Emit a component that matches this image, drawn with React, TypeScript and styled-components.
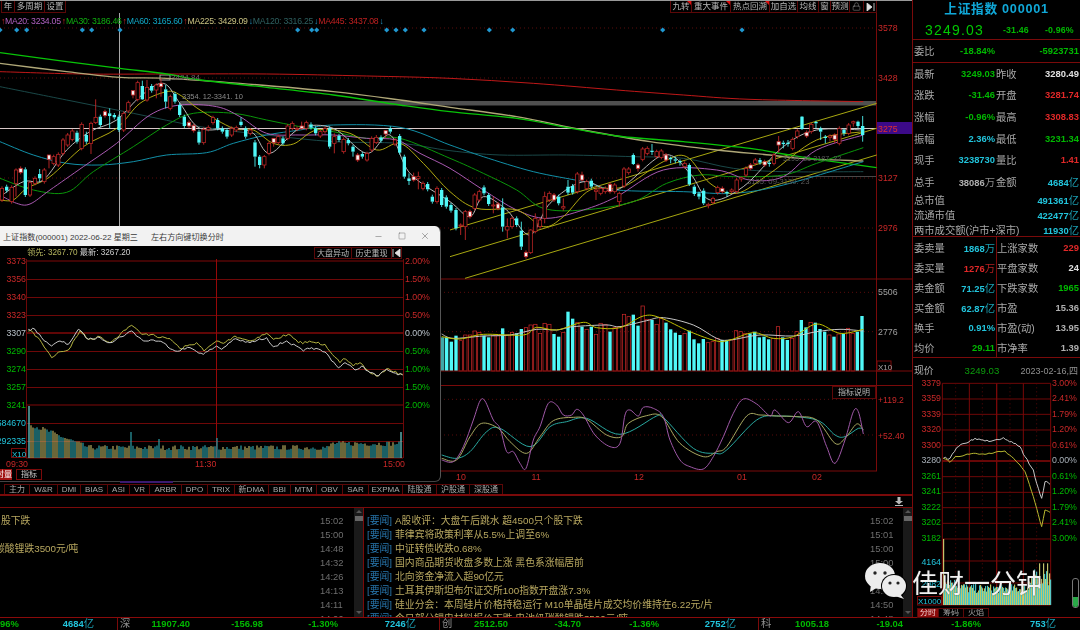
import React from 'react';
import styled, { createGlobalStyle } from 'styled-components';
import { Minus, Square, X, Lock } from 'lucide-react';

const SANS = `"Liberation Sans", "Noto Sans CJK SC", sans-serif`;
const RED = '#c82828';
const GREEN = '#00b800';
const CYAN = '#22c4dc';
const GRID = '#7a0a0a';

const Global = createGlobalStyle`
  html, body { margin: 0; padding: 0; background: #000; }
  body { font-family: ${SANS}; }
  * { box-sizing: border-box; }
`;

/* ---------- drawing helpers (coordinates are traced at 3x) ---------- */
type P = [number, number];
const pts = (flat: number[], dx = 0): P[] => {
  const r: P[] = [];
  for (let i = 0; i < flat.length; i += 2) r.push([flat[i] + dx, flat[i + 1]]);
  return r;
};
const smooth = (p: P[]) => {
  let d = `M${p[0][0]} ${p[0][1]}`;
  for (let i = 0; i < p.length - 1; i++) {
    const a = p[Math.max(i - 1, 0)], b = p[i], c = p[i + 1], e = p[Math.min(i + 2, p.length - 1)];
    d += `C${b[0] + (c[0] - a[0]) / 6} ${b[1] + (c[1] - a[1]) / 6} ${c[0] - (e[0] - b[0]) / 6} ${c[1] - (e[1] - b[1]) / 6} ${c[0]} ${c[1]}`;
  }
  return d;
};
let seed = 7;
const rnd = () => {
  seed = (seed * 16807) % 2147483647;
  return seed / 2147483647;
};
const jag = (p: P[], step: number, amp: number): string => {
  const out: string[] = [];
  for (let i = 0; i < p.length - 1; i++) {
    const n = Math.max(1, Math.round((p[i + 1][0] - p[i][0]) / step));
    for (let k = 0; k < n; k++) {
      const t = k / n;
      out.push(`${p[i][0] + (p[i + 1][0] - p[i][0]) * t},${p[i][1] + (p[i + 1][1] - p[i][1]) * t + (k ? (rnd() - 0.5) * amp : 0)}`);
    }
  }
  out.push(p[p.length - 1].join(','));
  return out.join(' ');
};

/* ---------- main chart data ---------- */
const MA_LINES: { c: string; w?: number; p: P[] }[] = [
  { c: '#1a4848', p: [...pts([0,260,200,300,400,340,600,380,800,405,1000,425,1200,430,1350,452]), ...pts([150,465,350,465,550,470,700,475,850,505,1000,515,1240,515],1350)] },
  { c: '#c01818', p: [...pts([0,215,250,222,500,222,800,222,1100,228,1350,235]), ...pts([250,250,500,270,700,285,900,298,1240,305],1350)] },
  { c: '#b0a878', w: 4, p: [...pts([0,190,200,215,360,232,500,235,720,250,1000,275,1200,300,1350,322]), ...pts([200,350,400,390,600,425,800,450,960,465,1050,475,1240,483],1350)] },
  { c: '#08c408', w: 4, p: [...pts([0,158,200,185,360,205,500,222,600,240,800,262,1000,285,1200,315,1350,335]), ...pts([200,355,350,382,500,408,700,425,900,445,1000,462,1100,478,1280,503],1350)] },
  { c: '#1290a8', p: [...pts([0,425,100,465,200,490,300,495,400,485,500,465,620,458,700,430,800,405,900,390,1000,375,1200,382,1350,435]), ...pts([100,470,250,515,400,545,500,570,700,575,850,580,1000,555,1240,485],1350)] },
  { c: '#0a960a', p: [...pts([0,535,100,570,200,577,280,515,400,440,500,375,580,340,700,340,800,360,900,380,1000,395,1100,415,1200,415,1350,475]), ...pts([100,520,200,570,280,625,400,630,550,605,650,550,750,525,850,530,1000,525,1100,490,1240,443],1350)] },
  { c: '#a858b0', p: [...pts([0,585,50,610,90,612,150,570,250,500,350,430,450,345,540,315,650,320,720,350,800,400,900,405,1000,405,1100,415,1190,420,1260,460,1350,505]), ...pts([100,570,200,630,290,655,400,630,500,590,640,510,800,510,900,540,1000,530,1100,450,1240,405],1350)] },
  { c: '#b0a810', p: [...pts([0,600,40,600,80,565,150,530,250,440,350,385,420,310,500,275,540,285,600,330,700,385,760,390,820,430,880,432,950,390,1050,400,1130,450,1200,430,1270,490,1350,575]), ...pts([80,625,200,630,280,680,340,650,420,570,520,560,640,485,710,470,780,550,860,580,960,520,1100,420,1240,395],1350)] },
  { c: '#b8b8b8', p: [...pts([0,590,70,545,130,540,200,450,270,395,350,360,420,290,490,250,540,310,600,385,700,385,760,400,810,460,900,385,1000,385,1100,460,1170,405,1230,520,1350,605]), ...pts([60,650,100,590,170,630,240,705,300,610,400,545,500,570,640,465,720,520,780,600,880,560,1000,440,1100,390,1240,390],1350)] },
];

type Candle = [number, number, number, number, number, string];
const c = (x: number, t: number, b: number, k: string, wt = t - 6, wb = b + 6): Candle => [x, t, b, wt, wb, k];
const CANDLES: Candle[] = [
  c(6,565,600,'r'),c(20,560,572,'c'),c(35,562,605,'r'),c(48,510,550,'r',505,590),c(62,505,517,'w'),c(76,508,585,'c'),c(90,548,585,'r'),c(105,535,550,'r'),c(119,522,535,'c',507,545),c(133,510,545,'r'),
  c(147,465,478,'w',465,505),c(161,470,490,'r'),c(175,463,495,'r'),c(189,420,460,'r'),c(203,405,435,'r'),c(217,393,418,'r'),c(231,398,425,'c'),c(245,373,445,'r'),c(259,405,425,'c',395,432),c(273,370,430,'r',365,462),
  c(287,352,368,'r',298,372),c(301,350,375,'c'),c(315,335,347,'w'),c(329,340,348,'c',325,385),c(343,345,352,'c'),c(357,350,390,'c'),c(371,340,390,'r'),c(385,308,333,'r'),c(399,272,285,'w',272,295),c(413,248,298,'r'),
  c(427,258,298,'c',242,300),c(441,262,300,'r',240,305),c(455,258,272,'c'),c(469,255,270,'r',250,295),c(483,250,260,'w',235,290),c(497,268,305,'c',255,325),c(511,290,325,'r'),c(525,282,305,'c'),c(539,315,345,'c'),c(553,350,378,'c'),
  c(567,367,378,'w'),c(581,377,392,'w'),c(597,395,428,'c'),c(611,388,428,'r'),c(625,382,388,'r'),c(639,353,368,'r'),c(653,360,385,'c'),c(667,385,395,'c'),c(681,390,410,'c'),c(695,385,405,'r'),
  c(709,383,390,'r'),c(723,365,375,'c',352,380),c(737,385,410,'c'),c(751,390,400,'r'),c(765,427,470,'c',420,500),c(779,470,495,'c',465,505),c(793,470,495,'r',465,505),c(807,430,460,'r'),c(821,415,428,'w',415,440),c(835,410,428,'r'),
  c(849,415,430,'c'),c(863,378,415,'r'),c(877,370,385,'r'),c(891,385,388,'r'),c(905,378,385,'w',365,390),c(919,368,385,'r'),c(933,373,383,'c'),c(947,385,400,'c'),c(961,395,408,'r'),c(975,385,395,'r'),
  c(989,385,440,'c'),c(1003,410,430,'r',400,460),c(1017,408,420,'c'),c(1031,418,455,'r'),c(1045,420,430,'c'),c(1059,440,455,'c',435,470),c(1073,465,480,'w'),c(1087,462,470,'c'),c(1101,460,480,'r',455,485),c(1115,415,450,'r'),
  c(1129,412,428,'r',405,432),c(1143,412,422,'c'),c(1157,392,402,'w',390,415),c(1171,385,395,'c'),c(1185,420,432,'r'),c(1199,408,458,'c'),c(1213,470,530,'c'),c(1227,535,543,'c',520,555),c(1241,530,540,'w',518,545),c(1255,530,535,'r',515,568),
  c(1269,550,565,'r'),c(1283,552,568,'c'),c(1297,590,605,'c'),c(1311,565,605,'r'),c(1325,570,615,'c'),c(1339,592,620,'c'),
];
const C2: Candle[] = [
  c(3,615,632,'c'),c(18,630,685,'c'),c(32,675,678,'r',670,705),c(46,635,680,'r',630,720),c(60,635,650,'w'),c(74,585,625,'r'),c(88,575,600,'r'),c(102,562,580,'c'),c(116,585,612,'c'),c(130,615,618,'r',590,640),
  c(144,612,625,'w'),c(158,622,680,'c',595,695),c(172,680,690,'r',655,715),c(186,655,680,'r'),c(200,655,675,'c'),c(214,692,740,'c',665,750),c(228,757,770,'w'),c(242,690,758,'r',688,762),c(256,655,695,'r',640,700),c(270,660,680,'r'),
  c(284,590,655,'r',575,670),c(298,580,600,'r'),c(312,585,600,'w'),c(326,590,610,'c'),c(340,620,624,'r',595,632),c(354,560,578,'c',540,585),c(368,558,578,'c'),c(382,522,575,'r'),c(396,525,540,'w',515,545),c(410,545,565,'r'),
  c(424,542,560,'c'),c(438,570,574,'r',560,600),c(452,565,580,'r'),c(466,565,575,'r'),c(480,553,575,'w'),c(494,555,575,'r'),c(508,580,605,'r',575,620),c(522,507,558,'r'),c(536,507,518,'r'),c(550,465,492,'c',460,495),
  c(564,495,505,'w',490,515),c(578,447,478,'r'),c(592,445,460,'r'),c(606,452,456,'c',432,465),c(620,455,470,'r'),c(634,453,472,'r'),c(648,465,480,'w'),c(662,474,478,'c',470,490),c(676,478,482,'c',470,490),c(690,483,487,'c',478,497),
  c(704,490,500,'r'),c(718,495,553,'c',490,558),c(733,560,582,'c'),c(747,580,590,'c',575,598),c(761,572,610,'c',565,615),c(775,613,617,'r',608,625),c(789,595,608,'r',590,612),c(803,563,578,'r'),c(817,565,575,'w'),c(831,576,580,'c',572,590),
  c(845,570,575,'r',565,580),c(860,540,575,'r'),c(874,533,537,'r',530,545),c(888,505,525,'r'),c(902,495,505,'w'),c(916,480,490,'r'),c(930,480,488,'c'),c(944,485,495,'w'),c(958,488,492,'c',482,500),c(972,465,490,'r'),
  c(986,425,435,'w',408,458),c(1000,428,432,'c',422,445),c(1014,428,432,'c',420,440),c(1028,418,445,'r'),c(1042,393,410,'r'),c(1056,350,387,'c',348,390),c(1070,397,408,'w'),c(1084,373,395,'r'),c(1098,366,370,'c',362,385),c(1112,385,395,'c',380,420),
  c(1126,410,414,'c',405,430),c(1140,408,412,'r',403,425),c(1154,405,418,'w',400,430),c(1168,385,430,'r'),c(1182,390,400,'c',385,408),c(1196,375,400,'r'),c(1210,365,369,'r',362,380),c(1224,365,378,'c',362,385),c(1238,378,405,'c',348,425),
];
const ALL_CANDLES = [...CANDLES, ...C2.map(k => [k[0] + 1350, k[1], k[2], k[3], k[4], k[5]] as Candle)];

const VOL_BARS: [number, number, string][] = [
  [8,172,'d'],[20,172,'c'],[34,185,'c'],[48,167,'c'],[62,182,'r'],[76,165,'r'],[90,165,'r'],[104,153,'r'],[118,157,'r'],[132,167,'c'],[146,172,'c'],[160,167,'r'],[174,167,'r'],[188,145,'c'],[202,165,'r'],[216,157,'r'],[230,160,'c'],[244,147,'c'],[258,143,'r'],[272,135,'r'],[286,133,'r'],[300,160,'r'],[314,130,'r'],[328,133,'r'],[342,162,'c'],[356,170,'c'],[370,157,'r'],[384,95,'c'],[398,116,'c'],[412,128,'r'],[426,140,'c'],[440,148,'r'],[454,140,'c'],[468,163,'r'],[482,130,'r'],[496,133,'r'],[510,155,'c'],[524,143,'r'],[538,140,'r'],[552,103,'r'],[566,110,'r'],[580,104,'c'],[594,137,'c'],[608,78,'r'],[622,118,'r'],[636,120,'c'],[650,133,'r'],[664,115,'r'],[678,128,'c'],[692,148,'c'],[706,158,'c'],[720,165,'c'],[734,160,'r'],[748,152,'c'],[762,178,'c'],[776,190,'c'],[790,177,'c'],[804,188,'r'],[818,185,'r'],[832,175,'r'],[846,180,'c'],[860,180,'c'],[874,180,'r'],[888,152,'r'],[902,155,'r'],[916,160,'r'],[930,160,'c'],[944,155,'c'],[958,172,'c'],[972,170,'c'],[986,178,'c'],[1000,175,'r'],[1014,140,'r'],[1028,172,'c'],[1042,180,'c'],[1056,175,'r'],[1070,155,'r'],[1084,120,'c'],[1098,142,'c'],[1112,127,'r'],[1126,128,'c'],[1140,147,'c'],[1154,155,'c'],[1168,165,'r'],[1182,170,'c'],[1196,162,'r'],[1210,162,'c'],[1224,145,'r'],[1238,160,'r'],[1252,155,'c'],[1266,108,'c'],
];
const VOL_Y = pts([5,170,60,177,130,163,250,165,290,142,350,150,430,127,470,143,540,143,610,108,660,113,750,155,830,183,870,180,940,158,1000,175,1060,170,1130,132,1200,160,1270,148]);
const VOL_W = pts([5,162,40,175,130,168,210,165,290,148,350,150,400,140,500,135,540,140,620,122,670,113,760,135,830,175,870,180,960,165,1060,168,1130,155,1200,148,1270,153]);
const IND_P = pts([5,540,40,545,70,500,100,420,120,363,135,363,160,420,180,445,200,515,220,515,240,550,258,565,280,480,300,440,325,370,350,375,370,405,395,405,410,388,430,405,465,465,510,500,540,490,555,405,570,390,595,408,610,382,640,385,670,410,690,480,720,540,750,560,790,567,820,530,850,470,880,400,910,357,950,372,990,408,1005,390,1045,428,1075,395,1100,440,1130,425,1160,500,1185,550,1215,480,1240,395,1255,395,1270,462]);
const IND_K = pts([5,535,50,540,90,470,125,430,175,445,210,485,260,520,300,470,340,422,400,412,440,418,500,465,545,470,565,430,620,407,665,410,720,490,790,530,830,515,860,500,920,408,960,405,1010,408,1070,410,1130,420,1185,490,1215,475,1250,432,1270,450]);
const IND_T = pts([5,525,50,535,90,515,140,455,180,445,270,500,330,440,380,425,440,415,540,463,650,408,670,412,760,505,825,520,860,510,950,420,1015,408,1130,420,1185,465,1215,470,1255,445,1270,450]);

const DIAMONDS = [0,50,80,247,275,360,893,935,950,1160,1188,1216,1272,1468,1538,1988,2226];

/* ---------- window data ---------- */
const WIN_Y = pts([85,315,100,320,125,350,155,395,175,378,205,372,240,315,265,340,300,332,330,350,385,303,395,298,425,325,460,325,480,335,510,338,540,368,590,350,612,375,650,345,670,352,705,330,750,345,800,322,820,340,865,325,895,350,935,348,975,355,1020,410,1030,398,1060,420,1080,410,1110,440,1135,450,1160,428,1180,438,1208,445]);
const WIN_W = pts([85,310,105,310,125,335,155,360,180,345,205,355,235,310,265,340,300,335,330,350,395,315,430,345,460,342,490,350,525,375,570,365,610,385,650,360,665,370,700,340,750,350,800,335,820,362,860,345,910,375,935,365,975,378,1015,425,1035,410,1065,432,1085,420,1110,440,1135,450,1160,430,1180,440,1208,447]);
const winLineY = jag(WIN_Y, 7, 8);
const winLineW = jag(WIN_W, 7, 7);
const WIN_BARS = Array.from({ length: 187 }, (_, i) => {
  const x = 29 + i * 2;
  const decay = Math.max(0, 30 - i) * 0.8;
  const tail = i > 150 ? 4 : 0;
  let h = 8 + rnd() * 5 + decay + tail;
  if (i === 0) h = 52;
  if (x === 131) h = 26;
  if (x === 159) h = 19;
  if (x === 217) h = 20;
  if (i === 186) h = 26;
  const warm = Math.floor(i / 3) % 2 === 0;
  return { x, h, col: x === 29 || i === 186 ? '#70d8d8' : warm ? '#b4ac60' : '#2c9fa8' };
});

/* mini */
const MINI_W = jag(pts([115,250,135,250,155,218,180,205,210,190,240,198,270,195,295,188,320,200,345,215,360,245,385,285,395,325,410,370,420,320,435,328]), 6, 7);
const MINI_Y = jag(pts([115,250,135,262,150,245,180,240,205,235,240,238,270,232,300,228,320,245,345,270,360,290,380,350,395,400,410,455,420,405,435,412]), 6, 5);
const MINI_BARS = Array.from({ length: 108 }, (_, i) => {
  const x = 116 + i * 3;
  let h = 35 + rnd() * 28 + Math.max(0, 25 - i) * 1.2;
  if (i > 85) h += 18 + rnd() * 30;
  if (i === 0) h = 198;
  if (i > 95 && i % 4 === 0) h = 125;
  return { x, h, col: i > 25 && i < 80 ? (i % 2 ? '#e8e870' : '#50e8e8') : i % 2 ? '#50e8e8' : '#e8e880' };
});

/* ---------- page frame ---------- */
const Page = styled.div`
  position: relative; width: 1080px; height: 630px; background: #000; overflow: hidden;
  display: flex; flex-direction: column; color: #b0b0b0; font-size: 10px;
`;
const Soft = styled.div`
  display: flex; flex-direction: column; width: 100%; height: 100%; filter: blur(0.35px);
`;
const Workspace = styled.div`display: flex; height: 617px;`;
const MainColumn = styled.div`display: flex; flex-direction: column; width: 912px; flex: none;`;

/* top toolbar */
const TopBar = styled.div`
  display: flex; justify-content: space-between; height: 13px; border-top: 1px solid #999;
  padding-right: 35px;
`;
const ToolGroup = styled.div<{ $pad?: number }>`display: flex; padding-left: ${p => p.$pad || 0}px;`;
const ToolButton = styled.div<{ $w: number; $flag?: boolean }>`
  position: relative; flex: none; width: ${p => p.$w}px; height: 12px; border: 1px solid #5c0808; border-top: 0; margin-left: -1px;
  line-height: 11px; font-size: 8.5px; color: #b8b8b8; white-space: nowrap; overflow: hidden;
  display: flex; align-items: center; justify-content: center;
  &::after {
    content: ''; display: ${p => (p.$flag ? 'block' : 'none')}; position: absolute; top: 0; right: 0;
    border-top: 4px solid #e01010; border-left: 4px solid transparent;
  }
`;

/* chart stage */
const Stage = styled.div`position: relative; height: 471px; width: 912px; overflow: hidden;`;
const ChartSvg = styled.svg`display: block; flex: none;`;
const Legend = styled.div`
  position: absolute; left: 1px; top: 2px; display: flex; white-space: nowrap; font-size: 8.7px;
  letter-spacing: -0.25px; line-height: 12px;
`;
const LegendItem = styled.span<{ $c: string }>`color: ${p => p.$c}; margin-right: 1px;`;
const Arrow = styled.span<{ $c: string }>`color: ${p => p.$c};`;
const AxisText = styled.text<{ $c?: string; $s?: number }>`
  font-family: ${SANS}; font-size: ${p => p.$s || 8.8}px; fill: ${p => p.$c || RED};
`;
const ExplainButton = styled.div`
  position: absolute; left: 832px; top: 373px; width: 44px; height: 13px; border: 1px solid #5c0808;
  text-align: center; font-size: 8px; line-height: 11px; color: #b8b8b8;
`;

/* floating window */
const Win = styled.div`
  position: absolute; left: 0; top: 213px; width: 441px; height: 256px; background: #000;
  border-right: 1px solid #555; border-bottom: 1px solid #444; border-radius: 0 6px 6px 0;
  display: flex; flex-direction: column; overflow: hidden;
`;
const WinTitle = styled.div`
  flex: none; height: 20px; background: #f2f2f2; color: #3a3a3a; display: flex; align-items: center;
  padding-left: 3px; font-size: 8.1px; white-space: nowrap;
`;
const WinTitleHint = styled.span`margin-left: 13px;`;
const WinControls = styled.div`
  margin-left: auto; display: flex; width: 86px; justify-content: space-between; padding: 0 10px 0 20px; align-items: center;
`;
const WinHead = styled.div`flex: none; height: 11px; display: flex; padding: 1px 38px 0 27px; font-size: 8.2px; line-height: 11px;`;
const WinQuote = styled.div`flex: 1; white-space: nowrap; color: #d0d0d0;`;
const Lead = styled.span`color: #b8b860;`;
const WinButton = styled.div<{ $w: number }>`
  flex: none; width: ${p => p.$w}px; height: 12px; border: 1px solid #5c0808; margin-left: -1px; color: #b8b8b8;
  line-height: 11px; font-size: 8px; display: flex; align-items: center; justify-content: center; white-space: nowrap;
`;
const WinTabs = styled.div`display: flex; height: 11px; flex: none; margin-top: 1px; gap: 4px;`;
const WinTab = styled.div<{ $w: number; $on?: boolean }>`
  flex: none; width: ${p => p.$w}px; border: ${p => (p.$on ? '0' : '1px solid #7a0a0a')}; font-size: 8px; line-height: 9px;
  display: flex; align-items: center; justify-content: ${p => (p.$on ? 'flex-end' : 'center')}; white-space: nowrap;
  color: ${p => (p.$on ? '#fff' : '#c8c8c8')}; background: ${p => (p.$on ? '#a01010' : '#000')}; overflow: hidden;
`;
const PurpleSliver = styled.div`
  position: absolute; left: 120px; top: 468px; width: 53px; height: 2px; background: #3a1a70;
`;

/* indicator tabs */
const TabRow = styled.div`display: flex; height: 10px; padding-left: 5px;`;
const Tab = styled.div<{ $w: number }>`
  flex: none; width: ${p => p.$w}px; height: 11px; margin-left: -1px; border: 1px solid #5c0808; text-align: center; color: #a8a8a8;
  font-size: 8px; line-height: 9px; white-space: nowrap; overflow: hidden;
`;
const Strip = styled.div`
  height: 14px; border-top: 2px solid #7a0a0a; border-bottom: 1px solid #7a0a0a; position: relative;
  display: flex; justify-content: flex-end; padding-right: 9px; align-items: center;
`;

/* news */
const News = styled.div`display: flex; height: 109px; overflow: hidden;`;
const NewsCol = styled.div<{ $w: number; $pad?: number }>`
  width: ${p => p.$w}px; flex: none; padding: 6px 0 0 ${p => p.$pad || 0}px;
`;
const NewsRow = styled.div`display: flex; height: 14px; line-height: 14px; white-space: nowrap; font-size: 9.8px; color: #b8a860;`;
const NewsTag = styled.span`color: #2878b0; margin-right: 3px; flex: none;`;
const NewsText = styled.span<{ $indent?: number }>`flex: 1; overflow: hidden; text-indent: ${p => p.$indent || 0}px;`;
const NewsTime = styled.span`color: #6e6e6e; flex: none; font-size: 9.4px; width: 22px; text-align: right;`;
const NewsGap = styled.div<{ $w: number }>`width: ${p => p.$w}px; flex: none;`;
const ScrollBar = styled.div`
  width: 9px; flex: none; background: #1a1a1a; display: flex; flex-direction: column; align-items: center; padding-top: 2px; position: relative;
`;
const ScrollUp = styled.div`width: 0; height: 0; border: 3px solid transparent; border-bottom: 3px solid #555; border-top: 0;`;
const ScrollDown = styled.div`position: absolute; bottom: 3px; width: 0; height: 0; border: 3px solid transparent; border-top: 3px solid #555; border-bottom: 0;`;
const ScrollThumb = styled.div`width: 8px; height: 5px; background: #666; margin-top: 3px;`;
const NewsDivider = styled.div`width: 1px; flex: none; background: #7a0a0a;`;

/* side panel */
const Side = styled.div`
  width: 168px; flex: none; border-left: 1px solid #7a0a0a; display: flex; flex-direction: column; position: relative;
`;
const SideTitle = styled.div`
  height: 21px; text-align: center; color: #10a8d8; font-weight: 700; font-size: 12.7px; line-height: 19px; letter-spacing: 0.7px;
`;
const Quote = styled.div`
  height: 19px; display: flex; align-items: center; border-bottom: 1px solid #7a0a0a; color: ${GREEN}; padding-left: 12px;
  font-weight: 700; font-size: 8.8px; letter-spacing: 0.15px;
`;
const BigPrice = styled.span`font-size: 14px; font-weight: 400; letter-spacing: 1.2px; width: 78px; color: #00c800;`;
const QuoteChange = styled.span<{ $w: number }>`width: ${p => p.$w}px;`;
const Block = styled.div<{ $line?: boolean }>`
  display: flex; flex-direction: column; ${p => (p.$line ? 'border-bottom: 1px solid #7a0a0a;' : '')}
`;
const Row = styled.div<{ $h: number }>`
  display: flex; align-items: center; height: ${p => p.$h}px; white-space: nowrap; padding: 0 1px;
`;
const Label = styled.span`font-size: 10.3px; color: #a8a8a8; flex: 1;`;
const Value = styled.span<{ $c: string }>`
  color: ${p => p.$c}; font-weight: 700; font-size: 9.4px; text-align: right; flex: none; margin-left: auto;
`;
const Unit = styled.span`font-weight: 400; font-size: 10.3px; opacity: 0.8;`;
const Cell = styled.div<{ $line?: boolean; $w?: number }>`
  display: flex; align-items: center; height: 100%;
  ${p => (p.$w ? `width: ${p.$w}px; flex: none; padding-right: 1px;` : 'flex: 1;')}
  ${p => (p.$line ? 'border-left: 1px solid #7a0a0a; padding-left: 0;' : '')}
`;
const NowRow = styled.div`
  height: 20px; padding: 4px 2px 0 1px; display: flex; align-items: center; font-size: 9.8px; white-space: nowrap;
`;
const NowPrice = styled.span`color: #0c9c0c; font-size: 9.6px; margin-left: 31px;`;
const NowDate = styled.span`color: #909090; margin-left: auto; font-size: 9px;`;
const MiniTabs = styled.div`display: flex; padding-left: 5px; height: 9px;`;
const MiniTab = styled.div<{ $w: number; $on?: boolean }>`
  flex: none; width: ${p => p.$w}px; height: 10px; margin-left: -1px; border: 1px solid #5c0808; font-size: 8px; line-height: 8px; text-align: center;
  color: ${p => (p.$on ? '#f0d0d0' : '#a0a0a0')}; background: ${p => (p.$on ? '#8c0a0a' : '#000')}; overflow: hidden;
`;
const Battery = styled.div`
  position: absolute; right: 1px; top: 578px; width: 7px; height: 30px; border: 1px solid #777; border-radius: 3px;
  display: flex; align-items: flex-end; overflow: hidden;
`;
const BatteryFill = styled.div`width: 100%; height: 10px; background: #2aa848;`;

/* status bar */
const Status = styled.div`
  height: 13px; border-top: 1px solid #8a0a0a; display: flex; font-weight: 700; font-size: 9.4px; line-height: 12px; white-space: nowrap; overflow: hidden;
`;
const Market = styled.div<{ $w: number; $line?: boolean }>`
  width: ${p => p.$w}px; flex: none; display: flex; position: relative; ${p => (p.$line ? 'border-left: 1px solid #7a0a0a;' : '')}
`;
const MarketName = styled.span`width: 12px; flex: none; font-weight: 400; color: #909090; font-size: 10.3px; padding-left: 2px;`;
const MarketCell = styled.span<{ $w: number; $c: string }>`
  width: ${p => p.$w}px; flex: none; text-align: right; color: ${p => p.$c};
`;
const Yi = styled.span`font-weight: 400; font-size: 10.3px; opacity: 0.8;`;

/* watermark */
const Watermark = styled.div`
  position: absolute; left: 865px; top: 563px; display: flex; align-items: center; color: #f2f2f2; z-index: 5;
  font-size: 26px; line-height: 34px; white-space: nowrap;
  font-family: "Noto Sans CJK SC", sans-serif;
`;
const WatermarkText = styled.span`margin-left: 5px; margin-top: 1px; text-shadow: 0 0 2px rgba(40,40,40,0.6);`;

/* ---------- sections ---------- */
const TABS: [string, number][] = [['主力',26],['W&R',29],['DMI',24],['BIAS',28],['ASI',23],['VR',21],['ARBR',33],['DPO',27],['TRIX',28],['新DMA',35],['BBI',23],['MTM',27],['OBV',27],['SAR',27],['EXPMA',35],['陆股通',35],['沪股通',34],['深股通',34]];

const priceColor = (k: string) => (k === 'c' ? '#50f8f8' : RED);

const MainChart = () => (
  <ChartSvg width={912} height={471} viewBox="0 13 912 471">
    {[28, 78, 178, 228].map(y => (
      <line key={y} x1={0} x2={876} y1={y} y2={y} stroke="#5a0c0c" strokeDasharray="1 3" />
    ))}
    <line x1={0} x2={876} y1={128.5} y2={128.5} stroke="#d8c8c8" strokeWidth={1} />
    <rect x={180} y={101} width={696} height={4.5} fill="#505050" />
    <line x1={119.5} x2={119.5} y1={13} y2={226} stroke="#a8a8a8" />
    <line x1={744} x2={876} y1={176.5} y2={176.5} stroke="#484848" />
    <line x1={0} x2={912} y1={279} y2={279} stroke={GRID} />
    <line x1={876.5} x2={876.5} y1={13} y2={471} stroke={GRID} />
    <rect x={160} y={75} width={10} height={5} fill="none" stroke="#a8a8a8" />

    {DIAMONDS.map(z => (
      <polygon key={z} points={`${z / 3},27.4 ${z / 3 + 2.6},30 ${z / 3},32.6 ${z / 3 - 2.6},30`} fill="#2098d0" />
    ))}

    <g transform="scale(0.33333)" fill="none">
      <line x1={1350} y1={690} x2={2630} y2={310} stroke="#a8a810" strokeWidth={3} />
      <line x1={1350} y1={770} x2={2630} y2={385} stroke="#a8a810" strokeWidth={3} />
      <line x1={1395} y1={835} x2={2630} y2={465} stroke="#a8a810" strokeWidth={3} />
      {MA_LINES.map((l, i) => (
        <path key={i} d={smooth(l.p)} stroke={l.c} strokeWidth={l.w || 3} />
      ))}
      {ALL_CANDLES.map(([x, t, b, wt, wb, k], i) => (
        <g key={i}>
          <line x1={x} x2={x} y1={wt} y2={t} stroke={priceColor(k)} strokeWidth={2.6} />
          <line x1={x} x2={x} y1={b} y2={wb} stroke={priceColor(k)} strokeWidth={2.6} />
          {k === 'w' ? (
            <rect x={x - 5} y={t} width={10} height={b - t} fill="#f4f4f4" stroke={RED} strokeWidth={2.4} />
          ) : k === 'c' ? (
            <rect x={x - 5} y={t} width={10} height={b - t} fill="#50f8f8" />
          ) : (
            <rect x={x - 5} y={t} width={10} height={Math.max(b - t, 2)} fill="#000" stroke={RED} strokeWidth={2.2} />
          )}
        </g>
      ))}
    </g>

    <AxisText x={171} y={80} $c="#6a6a6a" $s={8}>3424.84</AxisText>
    <AxisText x={182} y={98.5} $c="#8a8a8a" $s={7.5}>3354. 12-3341. 10</AxisText>
    <AxisText x={783} y={161} $c="#5c5c5c" $s={7.2}>3195. 31-3187. 32</AxisText>
    <AxisText x={747} y={184} $c="#5c5c5c" $s={7.7}>3105. 09-3130. 23</AxisText>

    {[[3578, 31], [3428, 81], [3127, 181], [2976, 231]].map(([val, y]) => (
      <AxisText key={val} x={878} y={y}>{val}</AxisText>
    ))}
    <rect x={877} y={122} width={35} height={12} fill="#3c0a88" />
    <AxisText x={878} y={131.5} $c="#e03030">3275</AxisText>

    <g transform="translate(440 280) scale(0.33333)" fill="none">
      {[37, 155].map(y => (
        <line key={y} x1={0} x2={1310} y1={y} y2={y} stroke="#5a0c0c" strokeWidth={3} strokeDasharray="3 9" />
      ))}
      {VOL_BARS.map(([x, t, k]) => (k === 'r' ? (
        <rect key={x} x={x - 5} y={t} width={10} height={273 - t} stroke={RED} strokeWidth={2.2} />
      ) : (
        <rect key={x} x={x - 5} y={t} width={10} height={273 - t} fill={k === 'd' ? '#40a8a8' : '#50f8f8'} />
      )))}
      <path d={smooth(VOL_W)} stroke="#c8c8c8" strokeWidth={3} />
      <path d={smooth(VOL_Y)} stroke="#c0c000" strokeWidth={3} />
      {[358, 465].map(y => (
        <line key={y} x1={0} x2={1310} y1={y} y2={y} stroke="#5a0c0c" strokeWidth={3} strokeDasharray="3 9" />
      ))}
      <path d={smooth(IND_T)} stroke="#28a8a0" strokeWidth={3} />
      <path d={smooth(IND_K)} stroke="#a8a860" strokeWidth={3} />
      <path d={smooth(IND_P)} stroke="#a058a8" strokeWidth={3} />
    </g>
    <line x1={441} x2={912} y1={371} y2={371} stroke={GRID} />
    <line x1={441} x2={912} y1={385.5} y2={385.5} stroke={GRID} />
    <line x1={441} x2={877} y1={471} y2={471} stroke={GRID} />
    <AxisText x={878} y={295} $c="#a0a0a0">5506</AxisText>
    <AxisText x={878} y={335} $c="#a0a0a0">2776</AxisText>
    <rect x={877} y={361} width={14} height={10} fill="none" stroke="#7a0a0a" />
    <AxisText x={878} y={370} $c="#a0a0a0" $s={8}>X10</AxisText>
    <AxisText x={878} y={403} $s={8.6}>+119.2</AxisText>
    <AxisText x={878} y={439} $s={8.6}>+52.40</AxisText>
    {[[10, 461], [11, 536], [12, 639], ['01', 742], ['02', 817]].map(([t, x]) => (
      <AxisText key={x} x={x as number} y={480} textAnchor="middle">{t}</AxisText>
    ))}
  </ChartSvg>
);

const WindowChart = () => (
  <ChartSvg width={440} height={211} viewBox="0 256 440 211">
    {[278, 296, 314, 350, 368, 386, 422, 440].map(y => (
      <line key={y} x1={26} x2={403} y1={y + 0.5} y2={y + 0.5} stroke="#6e0808" />
    ))}
    {[260, 332, 404, 457].map(y => (
      <line key={y} x1={26} x2={403} y1={y} y2={y} stroke="#800808" strokeWidth={y === 332 ? 1.6 : 1.2} />
    ))}
    <line x1={26.5} x2={26.5} y1={258} y2={457} stroke="#6e0808" />
    <line x1={403.5} x2={403.5} y1={258} y2={457} stroke="#6e0808" />
    <line x1={216.5} x2={216.5} y1={258} y2={457} stroke="#960808" />
    {WIN_BARS.map(b => (
      <line key={b.x} x1={b.x} x2={b.x} y1={457} y2={457 - b.h} stroke={b.col} strokeWidth={1.2} />
    ))}
    <g transform="translate(0 225) scale(0.33333)" fill="none">
      <polyline points={winLineY} stroke="#b4b440" strokeWidth={3} />
      <polyline points={winLineW} stroke="#c8c8c8" strokeWidth={3} />
    </g>
    {[[3373, 263, RED], [3356, 281, RED], [3340, 299, RED], [3323, 317, RED], [3307, 335, '#b8c0c8'], [3290, 353, GREEN], [3274, 371, GREEN], [3257, 389, GREEN], [3241, 407, GREEN]].map(([t, y, col]) => (
      <AxisText key={t as number} x={26} y={y as number} textAnchor="end" $c={col as string}>{t}</AxisText>
    ))}
    {[['2.00%', 263, RED], ['1.50%', 281, RED], ['1.00%', 299, RED], ['0.50%', 317, RED], ['0.00%', 335, '#b8c0c8'], ['0.50%', 353, GREEN], ['1.00%', 371, GREEN], ['1.50%', 389, GREEN], ['2.00%', 407, GREEN]].map(([t, y, col]) => (
      <AxisText key={y as number} x={405} y={y as number} $c={col as string}>{t}</AxisText>
    ))}
    <AxisText x={26} y={425} textAnchor="end" $c={CYAN}>584670</AxisText>
    <AxisText x={26} y={443} textAnchor="end" $c={CYAN}>292335</AxisText>
    <rect x={11.5} y={447.5} width={14} height={9} fill="none" stroke="#7a0a0a" />
    <AxisText x={12} y={455.5} $c={CYAN} $s={8}>X10</AxisText>
    <AxisText x={6} y={466} $c={RED}>09:30</AxisText>
    <AxisText x={195} y={466} $c={RED}>11:30</AxisText>
    <AxisText x={383} y={466} $c={RED}>15:00</AxisText>
  </ChartSvg>
);

const FloatingWindow = () => (
  <Win>
    <WinTitle>
      上证指数(000001) 2022-06-22 星期三
      <WinTitleHint>左右方向键切换分时</WinTitleHint>
      <WinControls>
        <Minus size={9} strokeWidth={1} color="#333" />
        <Square size={8} strokeWidth={1} color="#333" />
        <X size={10} strokeWidth={1} color="#333" />
      </WinControls>
    </WinTitle>
    <WinHead>
      <WinQuote><Lead>领先: 3267.70</Lead> 最新: 3267.20</WinQuote>
      <WinButton $w={38}>大盘异动</WinButton>
      <WinButton $w={41}>历史重现</WinButton>
      <WinButton $w={11}>
        <svg width={9} height={8} viewBox="0 0 9 8"><path d="M1 0v8M3 4l5-4v8z" fill="#e0e0e0" stroke="#e0e0e0" strokeWidth={0.8} /></svg>
      </WinButton>
    </WinHead>
    <WindowChart />
    <WinTabs>
      <WinTab $w={12} $on>时量</WinTab>
      <WinTab $w={26}>指标</WinTab>
    </WinTabs>
  </Win>
);

const RIGHT_NEWS: [string, string][] = [
  ['A股收评：大盘午后跳水 超4500只个股下跌', '15:02'],
  ['菲律宾将政策利率从5.5%上调至6%', '15:01'],
  ['中证转债收跌0.68%', '15:00'],
  ['国内商品期货收盘多数上涨 黑色系涨幅居前', '15:00'],
  ['北向资金净流入超90亿元', '14:59'],
  ['土耳其伊斯坦布尔证交所100指数开盘涨7.3%', '14:59'],
  ['硅业分会：本周硅片价格持稳运行 M10单晶硅片成交均价维持在6.22元/片', '14:50'],
  ['今日部分锂电材料报价下跌 电池级碳酸锂跌3500元/吨', '14:48'],
];
const LEFT_NEWS: [string, string, number][] = [
  ['股下跌', '15:02', 1],
  ['', '15:00', 0],
  ['碳酸锂跌3500元/吨', '14:48', -5],
  ['', '14:32', 0],
  ['', '14:26', 0],
  ['', '14:13', 0],
  ['', '14:11', 0],
  ['', '14:06', 0],
];

const Scroll = () => (
  <ScrollBar>
    <ScrollUp />
    <ScrollThumb />
    <ScrollDown />
  </ScrollBar>
);

const NewsPanel = () => (
  <News>
    <NewsCol $w={342}>
      {LEFT_NEWS.map(([t, time, ind]) => (
        <NewsRow key={time}><NewsText $indent={ind}>{t}</NewsText><NewsTime>{time}</NewsTime></NewsRow>
      ))}
    </NewsCol>
    <NewsGap $w={12} />
    <Scroll />
    <NewsDivider />
    <NewsCol $w={528} $pad={3}>
      {RIGHT_NEWS.map(([t, time]) => (
        <NewsRow key={t}><NewsTag>[要闻]</NewsTag><NewsText>{t}</NewsText><NewsTime>{time}</NewsTime></NewsRow>
      ))}
    </NewsCol>
    <NewsGap $w={11} />
    <Scroll />
  </News>
);

type Q = [string, React.ReactNode, string];
const v = (s: string, u: string) => <>{s}<Unit>{u}</Unit></>;
const BLOCK_A: [Q, Q][] = [
  [['最新', '3249.03', GREEN], ['昨收', '3280.49', '#e0e0e0']],
  [['涨跌', '-31.46', GREEN], ['开盘', '3281.74', '#e02828']],
  [['涨幅', '-0.96%', GREEN], ['最高', '3308.83', '#e02828']],
  [['振幅', '2.36%', CYAN], ['最低', '3231.34', GREEN]],
  [['现手', '3238730', CYAN], ['量比', '1.41', '#e02828']],
  [['总手', v('38086', '万'), '#b0b0b0'], ['金额', v('4684', '亿'), CYAN]],
];
const BLOCK_C: [Q, Q][] = [
  [['委卖量', v('1868', '万'), CYAN], ['上涨家数', '229', '#e02828']],
  [['委买量', v('1276', '万'), '#e02828'], ['平盘家数', '24', '#e0e0e0']],
  [['卖金额', v('71.25', '亿'), CYAN], ['下跌家数', '1965', GREEN]],
  [['买金额', v('62.87', '亿'), CYAN], ['市盈', '15.36', '#b0b0b0']],
  [['换手', '0.91%', CYAN], ['市盈(动)', '13.95', '#b0b0b0']],
  [['均价', '29.11', GREEN], ['市净率', '1.39', '#b0b0b0']],
];

const MiniChart = () => (
  <ChartSvg width={167} height={230} viewBox="913 378 167 230">
    <g transform="translate(905 375) scale(0.33333)" fill="none">
      {[25, 72, 118, 165, 212, 305, 352, 398, 445, 492].map(y => (
        <line key={y} x1={112} x2={437} y1={y} y2={y} stroke="#6e0808" strokeWidth={3} />
      ))}
      <line x1={112} x2={437} y1={258} y2={258} stroke="#8a0a0a" strokeWidth={5} />
      <line x1={112} x2={437} y1={690} y2={690} stroke="#8a0a0a" strokeWidth={3} />
      <line x1={112} x2={437} y1={558} y2={558} stroke="#6e0808" strokeWidth={3} />
      <line x1={112} x2={437} y1={624} y2={624} stroke="#6e0808" strokeWidth={3} />
      {[112, 193, 275, 355, 437].map(x => (
        <line key={x} x1={x} x2={x} y1={25} y2={690} stroke="#7a0808" strokeWidth={x === 275 ? 4 : 3} />
      ))}
      {[152, 232, 315, 395].map(x => (
        <line key={x} x1={x} x2={x} y1={25} y2={690} stroke="#5a0808" strokeWidth={3} strokeDasharray="3 9" />
      ))}
      {MINI_BARS.map(b => (
        <line key={b.x} x1={b.x} x2={b.x} y1={690} y2={690 - b.h} stroke={b.col} strokeWidth={3} />
      ))}
      <polyline points={MINI_W} stroke="#c8c8c8" strokeWidth={3} />
      <polyline points={MINI_Y} stroke="#b8b830" strokeWidth={3} />
    </g>
    {[[3379, 386, RED], [3359, 401, RED], [3339, 417, RED], [3320, 432, RED], [3300, 448, RED], [3280, 463, '#a8b0b8'], [3261, 479, GREEN], [3241, 494, GREEN], [3222, 510, GREEN], [3202, 525, GREEN], [3182, 541, GREEN]].map(([t, y, col]) => (
      <AxisText key={t as number} x={941} y={y as number} textAnchor="end" $c={col as string}>{t}</AxisText>
    ))}
    {[['3.00%', 386, RED], ['2.41%', 401, RED], ['1.79%', 417, RED], ['1.20%', 432, RED], ['0.61%', 448, RED], ['0.00%', 463, '#a8b0b8'], ['0.61%', 479, GREEN], ['1.20%', 494, GREEN], ['1.79%', 510, GREEN], ['2.41%', 525, GREEN], ['3.00%', 541, GREEN]].map(([t, y, col]) => (
      <AxisText key={y as number} x={1052} y={y as number} $c={col as string}>{t}</AxisText>
    ))}
    <AxisText x={941} y={565} textAnchor="end" $c={CYAN}>4164</AxisText>
    <AxisText x={941} y={587} textAnchor="end" $c={CYAN}>2082</AxisText>
    <rect x={917.5} y={596.5} width={24} height={8.5} fill="none" stroke="#7a0a0a" />
    <AxisText x={918} y={604} $c={CYAN} $s={8}>X1000</AxisText>
  </ChartSvg>
);

const QuoteRows = ({ rows, h, left, line }: { rows: [Q, Q][]; h: number; left: number; line?: boolean }) => (
  <>
    {rows.map(([a, b]) => (
      <Row key={a[0]} $h={h}>
        <Cell $w={left}>
          <Label>{a[0]}</Label>
          <Value $c={a[2]}>{a[1]}</Value>
        </Cell>
        <Cell $line={line}>
          <Label>{b[0]}</Label>
          <Value $c={b[2]}>{b[1]}</Value>
        </Cell>
      </Row>
    ))}
  </>
);

const SidePanel = () => (
  <Side>
    <SideTitle>上证指数 000001</SideTitle>
    <Quote>
      <BigPrice>3249.03</BigPrice>
      <QuoteChange $w={42}>-31.46</QuoteChange>
      <QuoteChange $w={32}>-0.96%</QuoteChange>
    </Quote>
    <Block $line>
      <Row $h={22}>
        <Cell $w={82}>
          <Label>委比</Label>
          <Value $c={GREEN}>-18.84%</Value>
        </Cell>
        <Cell>
          <Value $c={GREEN}>-5923731</Value>
        </Cell>
      </Row>
    </Block>
    <Block>
      <QuoteRows rows={BLOCK_A} h={21.6} left={82} />
    </Block>
    <Block $line>
      <Row $h={15}><Label>总市值</Label><Value $c={CYAN}>{v('491361', '亿')}</Value></Row>
      <Row $h={15}><Label>流通市值</Label><Value $c={CYAN}>{v('422477', '亿')}</Value></Row>
      <Row $h={14}><Label>两市成交额(沪市+深市)</Label><Value $c={CYAN}>{v('11930', '亿')}</Value></Row>
    </Block>
    <Block $line>
      <QuoteRows rows={BLOCK_C} h={20} left={82} line />
    </Block>
    <NowRow>
      现价<NowPrice>3249.03</NowPrice>
      <NowDate>2023-02-16,四</NowDate>
    </NowRow>
    <MiniChart />
    <MiniTabs>
      <MiniTab $w={22} $on>分时</MiniTab>
      <MiniTab $w={26}>筹码</MiniTab>
      <MiniTab $w={26}>火焰</MiniTab>
    </MiniTabs>
    <Battery><BatteryFill /></Battery>
  </Side>
);

const StatusBar = () => {
  const seg = (cells: [string, string][], w: number[], name?: string, width = 0) => (
    <Market $w={width} $line={!!name}>
      {name && <MarketName>{name}</MarketName>}
      {cells.map(([t, col], i) => {
        const m = t.match(/^(.*)亿$/);
        return (
          <MarketCell key={t} $w={w[i]} $c={col}>
            {m ? <>{m[1]}<Yi>亿</Yi></> : t}
          </MarketCell>
        );
      })}
    </Market>
  );
  return (
    <Status>
      {seg([['96%', GREEN], ['4684亿', CYAN]], [16, 78], undefined, 117)}
      {seg([['11907.40', GREEN], ['-156.98', GREEN], ['-1.30%', GREEN], ['7246亿', CYAN]], [60, 73, 75, 78], '深', 322)}
      {seg([['2512.50', GREEN], ['-34.70', GREEN], ['-1.36%', GREEN], ['2752亿', CYAN]], [56, 73, 78, 77], '创', 319)}
      {seg([['1005.18', GREEN], ['-19.04', GREEN], ['-1.86%', GREEN], ['753亿', CYAN]], [58, 74, 78, 75], '科', 322)}
    </Status>
  );
};

export default function App() {
  return (
    <Page>
      <Global />
      <Soft>
        <Workspace>
          <MainColumn>
            <TopBar>
              <ToolGroup $pad={2}>
                <ToolButton $w={14}>年</ToolButton>
                <ToolButton $w={31}>多周期</ToolButton>
                <ToolButton $w={22}>设置</ToolButton>
              </ToolGroup>
              <ToolGroup>
                <ToolButton $w={22} $flag>九转</ToolButton>
                <ToolButton $w={40} $flag>重大事件</ToolButton>
                <ToolButton $w={40} $flag>热点回溯</ToolButton>
                <ToolButton $w={29}>加自选</ToolButton>
                <ToolButton $w={22}>均线</ToolButton>
                <ToolButton $w={13}>窗</ToolButton>
                <ToolButton $w={20}>预测</ToolButton>
                <ToolButton $w={15}><Lock size={9} strokeWidth={1} color="#c8c8c8" /></ToolButton>
                <ToolButton $w={14}>
                  <svg width={9} height={8} viewBox="0 0 9 8"><path d="M8 0v8M6 4L1 0v8z" fill="#e0e0e0" stroke="#e0e0e0" strokeWidth={0.8} /></svg>
                </ToolButton>
              </ToolGroup>
            </TopBar>
            <Stage>
              <MainChart />
              <Legend>
                <Arrow $c={RED}>↑</Arrow>
                <LegendItem $c="#b060c0">MA20: 3234.05</LegendItem><Arrow $c={RED}>↑</Arrow>
                <LegendItem $c="#10b010">MA30: 3186.46</LegendItem><Arrow $c={RED}>↑</Arrow>
                <LegendItem $c="#10a8c8">MA60: 3165.60</LegendItem><Arrow $c={RED}>↑</Arrow>
                <LegendItem $c="#c8c080">MA225: 3429.09</LegendItem><Arrow $c="#2090c0">↓</Arrow>
                <LegendItem $c="#2e6060">MA120: 3316.25</LegendItem><Arrow $c="#2090c0">↓</Arrow>
                <LegendItem $c="#c02020">MA445: 3437.08</LegendItem><Arrow $c="#2090c0">↓</Arrow>
              </Legend>
              <FloatingWindow />
              <PurpleSliver />
              <ExplainButton>指标说明</ExplainButton>
            </Stage>
            <TabRow>
              {TABS.map(([t, w]) => <Tab key={t} $w={w}>{t}</Tab>)}
            </TabRow>
            <Strip>
              <svg width={8} height={9} viewBox="0 0 8 9"><path d="M2.5 0h3v4H8L4 7.5 0 4h2.5zM0 8h8v1H0z" fill="#b8b8b8" /></svg>
            </Strip>
            <NewsPanel />
          </MainColumn>
          <SidePanel />
        </Workspace>
        <StatusBar />
      </Soft>
      <Watermark>
        <svg width={42} height={36} viewBox="0 0 42 36">
          <ellipse cx={15} cy={13} rx={15} ry={13} fill="#ececec" />
          <path d="M6 21l-1 8 8-5z" fill="#ececec" />
          <circle cx={10} cy={10} r={1.7} fill="#222" />
          <circle cx={20} cy={10} r={1.7} fill="#222" />
          <ellipse cx={29} cy={23} rx={13} ry={12} fill="#000" />
          <ellipse cx={29} cy={23} rx={12} ry={11} fill="#ececec" />
          <path d="M35 31l4 5-9-3z" fill="#ececec" />
          <circle cx={25} cy={20} r={1.6} fill="#222" />
          <circle cx={33} cy={20} r={1.6} fill="#222" />
        </svg>
        <WatermarkText>佳财一分钟</WatermarkText>
      </Watermark>
    </Page>
  );
}
